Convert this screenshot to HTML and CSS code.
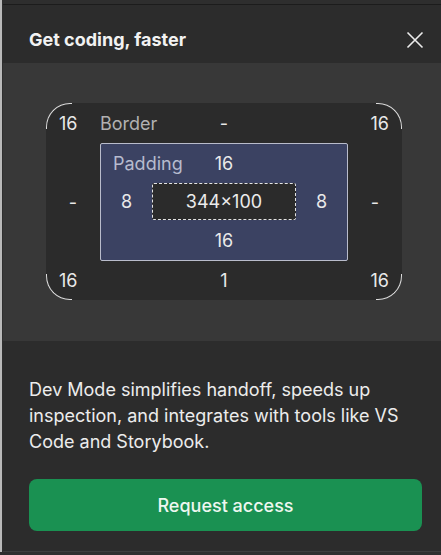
FILE: index.html
```html
<!DOCTYPE html>
<html lang="en">
<head>
    <meta charset="UTF-8">
    <meta name="viewport" content="width=device-width, initial-scale=1.0">
    <title>Get coding, faster</title>
    <link rel="stylesheet" href="styles.css">
</head>
<body>
    <div class="panel">
        <header class="panel-header">
            <h1>Get coding, faster</h1>
            <button class="close" aria-label="Close">
                <svg width="18" height="18" viewBox="0 0 18 18">
                    <path d="M1.5 1.5 L16.5 16.5 M16.5 1.5 L1.5 16.5" stroke="#ececec" stroke-width="1.6" fill="none"/>
                </svg>
            </button>
        </header>

        <section class="preview">
            <div class="box-model">
                <span class="arc tl"></span>
                <span class="arc tr"></span>
                <span class="arc bl"></span>
                <span class="arc br"></span>

                <div class="row-top">
                    <span class="num corner-l">16</span>
                    <span class="label">Border</span>
                    <span class="num">-</span>
                    <span></span>
                    <span class="num corner-r">16</span>
                </div>

                <span class="num side">-</span>
                <div class="padding-box">
                    <div class="pad-top">
                        <span class="label pad-label">Padding</span>
                        <span class="num">16</span>
                        <span></span>
                    </div>
                    <span class="num side">8</span>
                    <div class="content-box">344×100</div>
                    <span class="num side">8</span>
                    <div class="pad-bottom">
                        <span class="num">16</span>
                    </div>
                </div>
                <span class="num side">-</span>

                <div class="row-bottom">
                    <span class="num corner-l">16</span>
                    <span class="num">1</span>
                    <span class="num corner-r">16</span>
                </div>
            </div>
        </section>

        <footer class="panel-footer">
            <p>Dev Mode simplifies handoff, speeds up inspection, and integrates with tools like VS Code and Storybook.</p>
            <button class="primary">Request access</button>
        </footer>
    </div>
</body>
</html>
```

FILE: styles.css
```css
body {
    margin: 0;
    padding-top: 4px;
    background-color: #2e2e2e;
    border-left: 2px solid #b9b9b9;
    font-family: Inter, "Noto Sans", sans-serif;
    color: #ececec;
    overflow: hidden;
}
.panel {
    width: 445px;
    margin-left: 1px;
    border-top: 1px solid #1c1c1c;
    background-color: #2c2c2c;
}
.panel-header {
    display: flex;
    align-items: center;
    justify-content: space-between;
    height: 58px;
    padding: 11px 21px 0 26px;
    box-sizing: border-box;
}
.panel-header h1 {
    margin: 0;
    font-size: 18px;
    font-weight: 700;
    color: #f2f2f2;
}
.close {
    display: flex;
    background: none;
    border: none;
    padding: 0;
    margin-right: 3px;
    cursor: pointer;
}

.preview {
    background-color: #383838;
    padding: 40px 0 41px 43px;
}
.box-model {
    position: relative;
    width: 356px;
    height: 197px;
    box-sizing: border-box;
    background-color: #2b2b2b;
    border-radius: 24px;
    display: grid;
    grid-template-columns: 54px 1fr 54px;
    grid-template-rows: 40px 118px 39px;
    align-items: center;
}
.arc {
    position: absolute;
    width: 26px;
    height: 26px;
    box-sizing: border-box;
    border: 1.5px solid #dcdcdc;
}
.arc.tl { top: 0; left: 0; border-right: none; border-bottom: none; border-top-left-radius: 24px; }
.arc.tr { top: 0; right: 0; border-left: none; border-bottom: none; border-top-right-radius: 24px; }
.arc.bl { bottom: 0; left: 0; border-right: none; border-top: none; border-bottom-left-radius: 24px; }
.arc.br { bottom: 0; right: 0; border-left: none; border-top: none; border-bottom-right-radius: 24px; }

.num {
    font-size: 18px;
    color: #e9e9e9;
    text-align: center;
}
.label {
    font-size: 18px;
    color: #b1b1b1;
}
.corner-l {
    text-align: left;
    padding-left: 13px;
}
.corner-r {
    text-align: right;
    padding-right: 13px;
}
.row-top {
    grid-column: 1 / -1;
    display: grid;
    grid-template-columns: 54px 1fr auto 1fr 54px;
    align-items: center;
    padding-top: 1px;
}
.row-bottom {
    grid-column: 1 / -1;
    display: grid;
    grid-template-columns: 54px 1fr 54px;
    align-items: center;
}

.padding-box {
    height: 118px;
    box-sizing: border-box;
    background-color: #3b4262;
    border: 1px solid #b9bccb;
    border-radius: 2px;
    display: grid;
    grid-template-columns: 51px 1fr 51px;
    grid-template-rows: 39px 37px 40px;
    align-items: center;
}
.pad-top {
    grid-column: 1 / -1;
    display: grid;
    grid-template-columns: 1fr auto 1fr;
    align-items: center;
}
.pad-label {
    padding-left: 12px;
    color: #b6bbce;
}
.pad-bottom {
    grid-column: 1 / -1;
    text-align: center;
}
.content-box {
    height: 37px;
    box-sizing: border-box;
    display: flex;
    align-items: center;
    justify-content: center;
    background-color: #2b2b2b;
    border: 1px dashed #e4e4e4;
    border-radius: 2px;
    font-size: 18px;
    color: #ececec;
}

.panel-footer {
    padding: 36px 26px 20px 26px;
    border-bottom: 1px solid #3d3d3d;
}
.panel-footer p {
    margin: 0;
    font-size: 18px;
    line-height: 26px;
    color: #ececec;
}
.primary {
    display: block;
    width: 393px;
    height: 52px;
    margin-top: 24px;
    border: none;
    border-radius: 8px;
    background-color: #1a9152;
    color: #eef7f0;
    font-family: inherit;
    font-size: 18px;
    font-weight: 500;
    cursor: pointer;
}
```
